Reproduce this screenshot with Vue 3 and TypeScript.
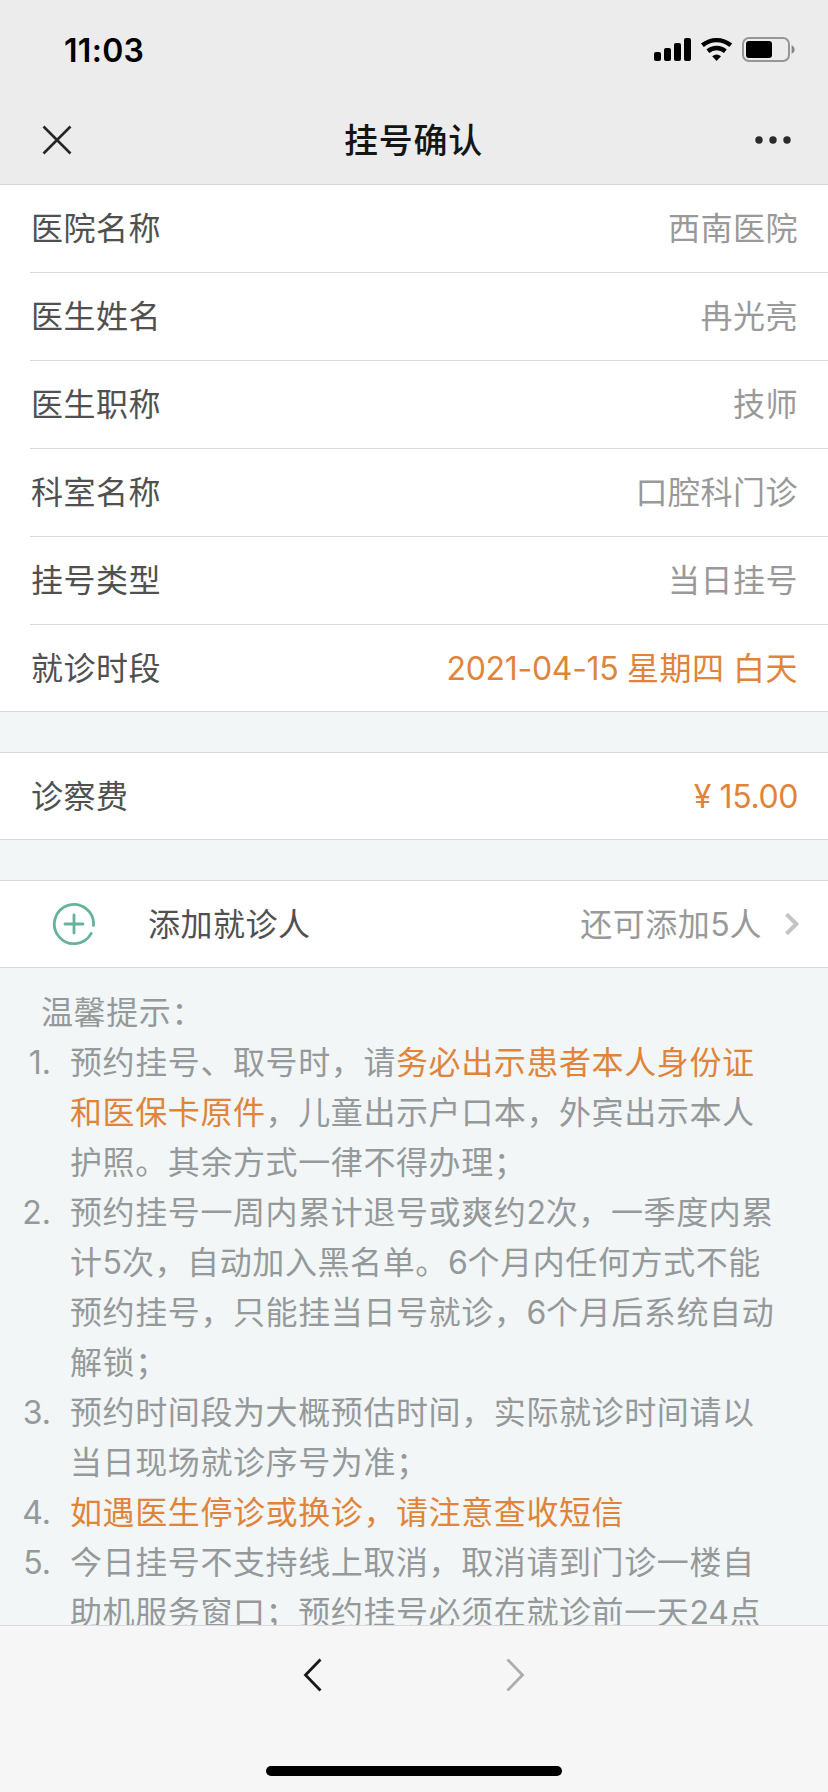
<script setup lang="ts">
interface Row { label: string; value: string; accent?: boolean }
interface Segment { text: string; accent?: boolean }
interface Run { text: string; latin: boolean }

const rows: Row[] = [
  { label: '医院名称', value: '西南医院' },
  { label: '医生姓名', value: '冉光亮' },
  { label: '医生职称', value: '技师' },
  { label: '科室名称', value: '口腔科门诊' },
  { label: '挂号类型', value: '当日挂号' },
  { label: '就诊时段', value: '2021-04-15 星期四 白天', accent: true },
]

const tips: Segment[][][] = [
  [
    [{ text: '预约挂号、取号时，请' }, { text: '务必出示患者本人身份证', accent: true }],
    [{ text: '和医保卡原件', accent: true }, { text: '，儿童出示户口本，外宾出示本人' }],
    [{ text: '护照。其余方式一律不得办理；' }],
  ],
  [
    [{ text: '预约挂号一周内累计退号或爽约2次，一季度内累' }],
    [{ text: '计5次，自动加入黑名单。6个月内任何方式不能' }],
    [{ text: '预约挂号，只能挂当日号就诊，6个月后系统自动' }],
    [{ text: '解锁；' }],
  ],
  [
    [{ text: '预约时间段为大概预估时间，实际就诊时间请以' }],
    [{ text: '当日现场就诊序号为准；' }],
  ],
  [[{ text: '如遇医生停诊或换诊，请注意查收短信', accent: true }]],
  [
    [{ text: '今日挂号不支持线上取消，取消请到门诊一楼自' }],
    [{ text: '助机服务窗口；预约挂号必须在就诊前一天24点' }],
  ],
]

// Digits are tracked tighter than Chinese characters.
function runs(text: string): Run[] {
  return text
    .split(/([\d-]+)/)
    .filter((part) => part.length > 0)
    .map((part) => ({ text: part, latin: /^[\d-]+$/.test(part) }))
}
</script>

<template>
  <div class="screen">
    <header class="top">
      <div class="status">
        <span class="time">11:03</span>
        <svg class="indicators" width="144" height="28" viewBox="0 0 144 28">
          <rect x="1" y="16" width="7" height="9" rx="2" />
          <rect x="11" y="12" width="7" height="13" rx="2" />
          <rect x="21" y="7" width="7" height="18" rx="2" />
          <rect x="31" y="2" width="7" height="23" rx="2" />
          <g fill="none" stroke="#000" stroke-width="4.4">
            <path d="M49.4 9.3a22 22 0 0 1 28.4 0" />
            <path d="M54.9 15.2a13.5 13.5 0 0 1 17.4 0" />
          </g>
          <path d="M59.2 20.2a7 7 0 0 1 8.8 0L63.6 25z" />
          <rect x="90" y="2" width="46" height="23" rx="6" fill="none" stroke="#969696" stroke-width="2" />
          <rect x="93" y="5" width="26" height="17" rx="3" />
          <path d="M138.6 9.2a4.6 4.6 0 0 1 0 8.6z" fill="#868686" />
        </svg>
      </div>
      <div class="nav">
        <svg class="close" width="30" height="30" viewBox="0 0 30 30">
          <path d="M1.5 1.5 28.5 28.5M28.5 1.5 1.5 28.5" fill="none" stroke="#262626" stroke-width="2.6" />
        </svg>
        <h1 class="title">挂号确认</h1>
        <svg class="more" width="36" height="8" viewBox="0 0 36 8">
          <circle cx="4" cy="4" r="3.7" /><circle cx="18" cy="4" r="3.7" /><circle cx="32" cy="4" r="3.7" />
        </svg>
      </div>
    </header>

    <main class="page">
      <section class="group first">
        <div v-for="row in rows" :key="row.label" class="cell">
          <span>{{ row.label }}</span>
          <span class="value" :class="{ accent: row.accent }">
            <span v-for="(run, i) in runs(row.value)" :key="i" :class="{ latin: run.latin }">{{ run.text }}</span>
          </span>
        </div>
      </section>
      <section class="group">
        <div class="cell">
          <span>诊察费</span>
          <span class="value accent fee">¥ 15.00</span>
        </div>
      </section>
      <section class="group">
        <div class="cell add">
          <svg class="plus" width="44" height="44" viewBox="0 0 44 44">
            <g fill="none" stroke="#66b29e" stroke-width="2.8" stroke-linecap="round">
              <path d="M41.5 23.5A19.6 19.6 0 1 0 39.2 31.4" />
              <path d="M22 13v18M13 22h18" />
            </g>
          </svg>
          <span>添加就诊人</span>
          <span class="value">还可添加<span class="latin">5</span>人</span>
          <svg class="chevron" width="16" height="24" viewBox="0 0 16 24">
            <path d="M2.4 2.3 12.4 12 2.4 21.7" fill="none" stroke="#c4c4c6" stroke-width="4" />
          </svg>
        </div>
      </section>

      <section class="tips">
        <p class="heading">温馨提示：</p>
        <ol class="list">
          <li v-for="(tip, i) in tips" :key="i" class="tip">
            <span class="num">{{ i + 1 }}.</span>
            <div class="body">
              <div v-for="(line, j) in tip" :key="j" class="line">
                <span v-for="(seg, k) in line" :key="k" :class="{ accent: seg.accent }"><span v-for="(run, r) in runs(seg.text)" :key="r" :class="{ latin: run.latin }">{{ run.text }}</span></span>
              </div>
            </div>
          </li>
        </ol>
      </section>
    </main>

    <footer class="toolbar">
      <div class="arrows">
        <svg width="20" height="34" viewBox="0 0 20 34">
          <path d="M17.5 1.5 2.5 17 17.5 32.5" fill="none" stroke="#1a1a1a" stroke-width="2.8" />
        </svg>
        <svg width="20" height="34" viewBox="0 0 20 34">
          <path d="M2.5 1.5 17.5 17 2.5 32.5" fill="none" stroke="#adadad" stroke-width="2.8" />
        </svg>
      </div>
      <div class="home"></div>
    </footer>
  </div>
</template>

<style>
body { margin: 0; }
</style>

<style scoped>
.screen {
  width: 828px;
  height: 1792px;
  display: flex;
  flex-direction: column;
  overflow: hidden;
  background: #f2f6f7;
  font-family: Inter, "Noto Sans CJK SC", sans-serif;
  font-size: 32px;
  color: #505050;
}
.top {
  flex: none;
  box-sizing: border-box;
  height: 185px;
  background: #ececec;
  border-bottom: 1px solid #d5d5d5;
}
.status {
  display: flex;
  justify-content: space-between;
  align-items: center;
  height: 100px;
  padding: 0 31px 0 64px;
}
.time { font-weight: 600; font-size: 32px; color: #000; letter-spacing: 0.3px; }
.indicators { display: block; }
.nav {
  display: grid;
  grid-template-columns: 1fr auto 1fr;
  align-items: center;
  height: 80px;
  padding: 0 37px 0 42px;
}
.close { display: block; }
.title {
  margin: 1px 6px 0 0;
  font-size: 34px;
  line-height: 50px;
  font-weight: 500;
  letter-spacing: 0.7px;
  color: #151515;
}
.more { justify-self: end; fill: #2a2a2a; }
.page { flex: 1; min-height: 0; overflow: hidden; }
.group {
  margin-bottom: 40px;
  border-top: 1px solid #d7d8d9;
  border-bottom: 1px solid #d7d8d9;
  background: #fff;
}
.group.first { border-top: 0; }
.group:nth-child(3) { margin-bottom: 0; }
.cell {
  box-sizing: border-box;
  display: flex;
  justify-content: space-between;
  align-items: center;
  height: 86px;
  padding: 2px 30px 0 1px;
  margin-left: 30px;
  line-height: 50px;
  letter-spacing: 0.5px;
  white-space: nowrap;
}
.first .cell:not(:last-child) { height: 88px; padding-top: 1px; border-bottom: 1px solid #d9d9d9; }
.value { color: #999; word-spacing: -1px; }
.accent { color: #e0843a; }
.latin { letter-spacing: -0.3px; }
.fee { letter-spacing: -0.4px; word-spacing: 0; }
.add { margin-left: 51px; padding-right: 28px; }
.add .value { margin-left: auto; }
.plus { margin: -2px 52px 0 0; }
.chevron { margin: -2px 0 0 22px; }
.tips { color: #95999a; letter-spacing: 0.6px; line-height: 50px; white-space: nowrap; }
.heading { margin: 0; padding: 20px 0 0 41px; }
.list { margin: 0; padding: 0; list-style: none; }
.tip { display: flex; }
.num { width: 51px; margin-right: 19px; text-align: right; letter-spacing: 0; }
.line { height: 50px; }
.line .latin { letter-spacing: -0.2px; }
.toolbar {
  flex: none;
  box-sizing: border-box;
  height: 167px;
  border-top: 1px solid #d9dadb;
  background: #f6f6f6;
  display: flex;
  flex-direction: column;
  align-items: center;
  justify-content: space-between;
  padding: 32px 0 16px;
}
.arrows { display: flex; gap: 182px; }
.arrows svg { display: block; }
.home { width: 296px; height: 10px; border-radius: 5px; background: #000; }
</style>
